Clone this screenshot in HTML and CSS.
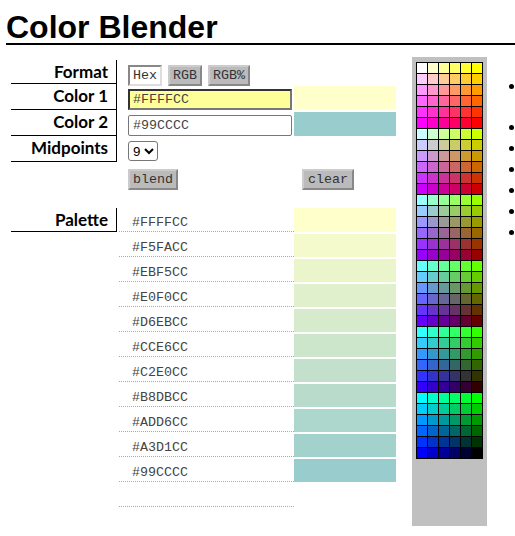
FILE: index.html
```html
<!DOCTYPE html>
<html lang="en">
<head>
    <meta charset="UTF-8">
    <meta name="viewport" content="width=device-width, initial-scale=1.0">
    <title>Color Blender</title>
    <link rel="stylesheet" href="styles.css">
</head>
<body>
    <h1 class="title">Color Blender</h1>

    <div class="layout">
        <div class="blender">
            <div class="row row-format">
                <div class="label">Format</div>
                <div class="controls">
                    <button class="btn active">Hex</button>
                    <button class="btn">RGB</button>
                    <button class="btn">RGB%</button>
                </div>
            </div>
            <div class="row">
                <div class="label">Color 1</div>
                <div class="controls">
                    <input type="text" class="color-input focused" value="#FFFFCC">
                </div>
                <div class="swatch swatch-top" style="background-color: #ffffcc;"></div>
            </div>
            <div class="row">
                <div class="label">Color 2</div>
                <div class="controls">
                    <input type="text" class="color-input" value="#99CCCC">
                </div>
                <div class="swatch swatch-top" style="background-color: #99cccc;"></div>
            </div>
            <div class="row">
                <div class="label">Midpoints</div>
                <div class="controls">
                    <select class="midpoints">
                        <option>9</option>
                    </select>
                </div>
            </div>
            <div class="actions">
                <button class="btn">blend</button>
                <button class="btn btn-clear">clear</button>
            </div>

            <!-- Palette -->
            <div class="palette">
                <div class="label label-palette">Palette</div>
                <div class="palette-list">
                    <div class="palette-row"><span class="hex">#FFFFCC</span><div class="swatch" style="background-color: #ffffcc;"></div></div>
                    <div class="palette-row"><span class="hex">#F5FACC</span><div class="swatch" style="background-color: #f5facc;"></div></div>
                    <div class="palette-row"><span class="hex">#EBF5CC</span><div class="swatch" style="background-color: #ebf5cc;"></div></div>
                    <div class="palette-row"><span class="hex">#E0F0CC</span><div class="swatch" style="background-color: #e0f0cc;"></div></div>
                    <div class="palette-row"><span class="hex">#D6EBCC</span><div class="swatch" style="background-color: #d6ebcc;"></div></div>
                    <div class="palette-row"><span class="hex">#CCE6CC</span><div class="swatch" style="background-color: #cce6cc;"></div></div>
                    <div class="palette-row"><span class="hex">#C2E0CC</span><div class="swatch" style="background-color: #c2e0cc;"></div></div>
                    <div class="palette-row"><span class="hex">#B8DBCC</span><div class="swatch" style="background-color: #b8dbcc;"></div></div>
                    <div class="palette-row"><span class="hex">#ADD6CC</span><div class="swatch" style="background-color: #add6cc;"></div></div>
                    <div class="palette-row"><span class="hex">#A3D1CC</span><div class="swatch" style="background-color: #a3d1cc;"></div></div>
                    <div class="palette-row"><span class="hex">#99CCCC</span><div class="swatch" style="background-color: #99cccc;"></div></div>
                    <div class="palette-row"><span class="hex"></span></div>
                </div>
            </div>
        </div>

        <div class="picker">
            <div class="picker-grid" id="pickerGrid"></div>
        </div>

        <ul class="notes">
            <li class="tall"></li>
            <li></li>
            <li></li>
            <li></li>
            <li></li>
            <li></li>
            <li></li>
        </ul>
    </div>

    <script src="script.js"></script>
</body>
</html>
```

FILE: styles.css
```css
* {
    margin: 0;
    padding: 0;
    box-sizing: border-box;
}

body {
    background-color: #fff;
    color: #000;
    overflow: hidden;
    font-family: 'Liberation Sans', Arial, sans-serif;
}

.title {
    margin-left: 6px;
    height: 45px;
    padding-top: 11px;
    font-size: 32px;
    line-height: 32px;
    font-weight: bold;
    border-bottom: 2px solid #000;
}

.layout {
    display: flex;
    align-items: flex-start;
    padding-left: 11px;
}

.blender {
    width: 385px;
    margin-top: 15px;
}

.row {
    display: flex;
    height: 26px;
}

.row-format {
    height: 24px;
}

.label {
    width: 106px;
    flex: none;
    padding-right: 8px;
    text-align: right;
    font-family: Lato, sans-serif;
    font-size: 17px;
    font-weight: bold;
    line-height: 23px;
    border-right: 1px solid #000;
    border-bottom: 1px solid #000;
}

.controls {
    width: 177px;
    flex: none;
    display: flex;
    align-items: flex-start;
    gap: 6px;
    padding-left: 11px;
    padding-top: 5px;
}

.btn {
    height: 21px;
    padding: 0 3px;
    font-family: 'Liberation Mono', 'Courier New', monospace;
    font-size: 13.33px;
    color: #333;
    background-color: #bbb;
    border: 2px solid;
    border-color: #ccc #888 #888 #ccc;
}

.btn.active {
    background-color: #fff;
    border-color: #888 #ddd #ddd #888;
}

.color-input {
    width: 164px;
    height: 21px;
    padding: 0 3px 0 4px;
    font-family: 'Liberation Mono', 'Courier New', monospace;
    font-size: 13.33px;
    color: #444;
    background-color: #fff;
    border: 1px solid #777;
    border-radius: 2px;
}

.color-input.focused {
    background-color: #ffff99;
    border: 2px solid;
    border-color: #333 #777 #777 #333;
    border-radius: 0;
    padding: 0 2px 0 3px;
}

.midpoints {
    width: 30px;
    height: 20px;
    font-family: 'Liberation Sans', Arial, sans-serif;
    font-size: 13.33px;
    background-color: #fff;
    border: 1px solid #777;
    border-radius: 3px;
}

.swatch {
    width: 102px;
    height: 23px;
    flex: none;
    margin-top: 2px;
}

.swatch-top {
    height: 24px;
}

.actions {
    display: flex;
    padding: 7px 0 0 117px;
}

.actions .btn {
    width: 50px;
    padding: 0;
}

.actions .btn-clear {
    width: 52px;
    margin-left: 124px;
}

.palette {
    display: flex;
    margin-top: 17px;
}

.label-palette {
    height: 24px;
    margin-top: 1px;
}

.palette-list {
    margin-left: 2px;
}

.palette-row {
    display: flex;
    height: 25px;
}

.palette-row:first-child .swatch {
    height: 24px;
    margin-top: 1px;
}

.hex {
    width: 175px;
    flex: none;
    padding: 8px 0 0 13px;
    font-family: 'Liberation Mono', 'Courier New', monospace;
    font-size: 13.33px;
    line-height: 16px;
    color: #444;
    border-bottom: 1px dotted #aaa;
}

.picker {
    width: 75px;
    height: 469px;
    flex: none;
    margin: 12px 0 0 16px;
    padding: 5px 4px;
    background-color: #c0c0c0;
}

.picker-grid {
    display: grid;
    grid-template-columns: repeat(6, 10px);
    grid-auto-rows: 10px;
    gap: 1px;
    width: 67px;
    padding: 1px;
    background-color: #000;
}

.notes {
    flex: none;
    width: 6px;
    margin: 32px 0 0 22px;
    overflow: hidden;
    list-style-position: inside;
    font-size: 16px;
}

.notes li {
    height: 21px;
}

.notes li.tall {
    height: 41px;
}
```

FILE: script.js
```js
// Web-safe colour picker, six steps per channel
document.addEventListener('DOMContentLoaded', () => {
    const grid = document.getElementById('pickerGrid');
    const steps = ['ff', 'cc', '99', '66', '33', '00'];

    steps.forEach((r) => {
        steps.forEach((g) => {
            steps.forEach((b) => {
                const cell = document.createElement('div');
                cell.style.backgroundColor = '#' + r + g + b;
                grid.appendChild(cell);
            });
        });
    });
});
```
